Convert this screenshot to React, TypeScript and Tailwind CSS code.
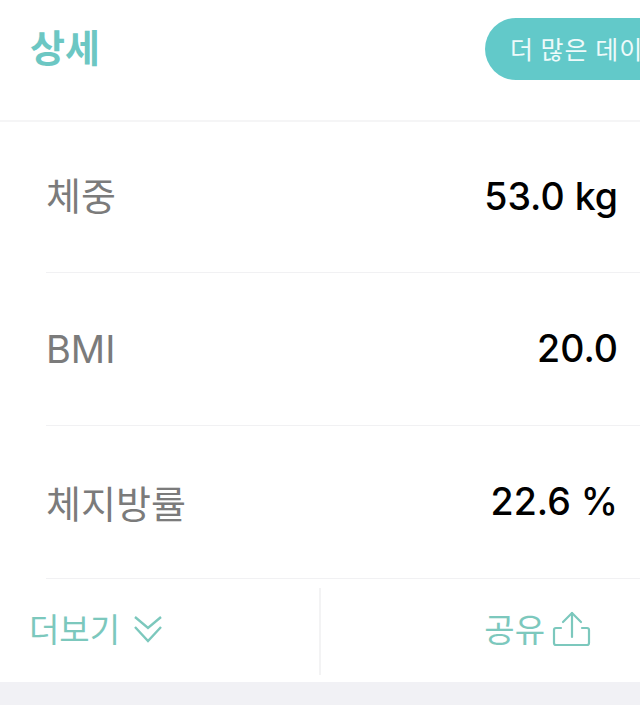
const font = { fontFamily: '"Noto Sans CJK KR", "Noto Sans", sans-serif' };
const latin = { fontFamily: 'Inter, "Noto Sans CJK KR", sans-serif' };

function Row({ label, value, first }: { label: string; value: string; first?: boolean }) {
  return (
    <div className={`${first ? "h-[151px]" : "h-[153px]"} ml-[46px] flex items-center justify-between pr-[22px] border-b border-[#f1f1f3]`}>
      <span className={`text-[38px] leading-none text-[#7b7b7b] ${first ? "-translate-y-[3px]" : ""}`} style={label === "BMI" ? latin : undefined}>{label}</span>
      <span className="text-[37.5px] leading-none font-medium text-black" style={latin}>{value}</span>
    </div>
  );
}

export default function App() {
  return (
    <div className="w-[640px] h-[705px] bg-white overflow-hidden flex flex-col" style={font}>
      <header className="h-[122px] shrink-0 flex items-start justify-between border-b-2 border-[#f5f5f6]">
        <h1 className="ml-[30px] mt-[22px] text-[38px] leading-[48px] font-bold text-[#6cc7c3]">상세</h1>
        <div className="mt-[18px] w-[155px] h-[62px] rounded-l-[31px] bg-[#62c9c9] pl-[25px] pb-[2px] flex items-center overflow-hidden whitespace-nowrap">
          <span className="text-[25px] leading-none tracking-[1px] text-[#eefafa]">더 많은 데이터</span>
        </div>
      </header>
      <div className="shrink-0">
        <Row first label="체중" value="53.0 kg" />
        <Row label="BMI" value="20.0" />
        <Row label="체지방률" value="22.6 %" />
      </div>
      <div className="h-[103px] shrink-0 flex items-stretch">
        <div className="w-[321px] flex items-center gap-[13px] pl-[29px] pb-[6px] mt-[9px] mb-[7px] border-r-2 border-[#f3f3f4]">
          <span className="text-[33px] leading-none text-[#7cc8bd]">더보기</span>
          <svg width="30" height="30" viewBox="0 0 30 30" fill="none" stroke="#7cc8bd" strokeWidth="2.4">
            <path d="M2 3l13 11L28 3" />
            <path d="M2 13l13 14 13-14" />
          </svg>
        </div>
        <div className="flex-1 flex items-center justify-end gap-[7px] pr-[49px] pb-[4px]">
          <span className="text-[33px] leading-none text-[#7cc8bd]">공유</span>
          <svg width="39" height="36" viewBox="0 0 39 36" fill="none" stroke="#7cc8bd" strokeWidth="2.2" strokeLinecap="round" strokeLinejoin="round">
            <path d="M20 26V2" />
            <path d="M11 11l9-9 9 9" />
            <path d="M9 17H4a2 2 0 0 0-2 2v13a2 2 0 0 0 2 2h31a2 2 0 0 0 2-2V19a2 2 0 0 0-2-2h-5" />
          </svg>
        </div>
      </div>
      <div className="flex-1 bg-[#f1f1f5]" />
    </div>
  );
}
